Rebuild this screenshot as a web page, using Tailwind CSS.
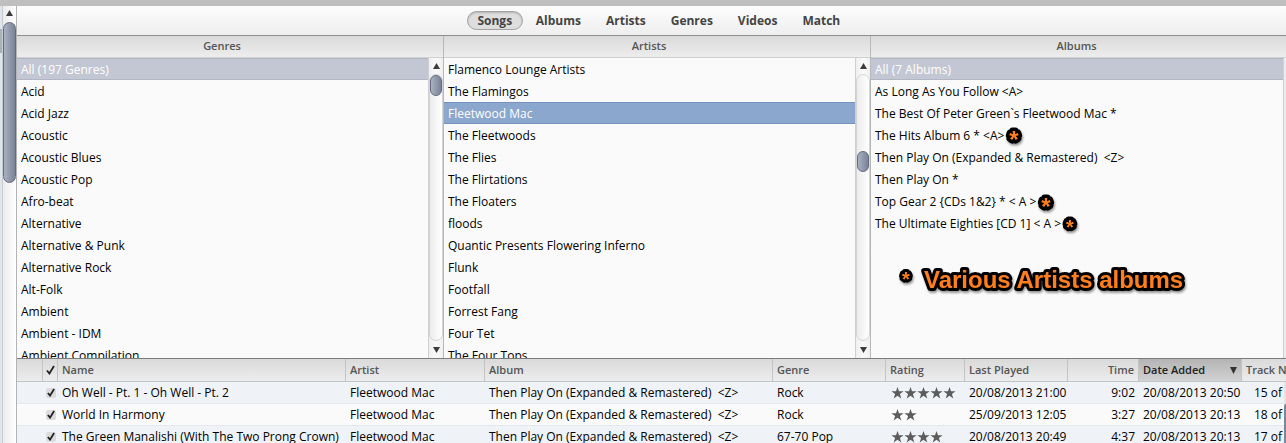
<!DOCTYPE html>
<html lang="en">
  <head>
    <meta charset="UTF-8" />
    <meta name="viewport" content="width=device-width, initial-scale=1.0" />
    <title>Music Library</title>
    <script src="https://cdn.jsdelivr.net/npm/@tailwindcss/browser@4"></script>
  </head>
  <body
    class="h-screen overflow-hidden flex flex-col bg-[#fafafa] font-['Open_Sans','Noto_Sans',sans-serif] text-[12px] leading-[22px] text-black"
  >
    <div class="h-[6px] shrink-0 bg-[#bfbfbf]"></div>

    <div class="flex flex-1 min-h-0">
      <!-- Sidebar edge with its scrollbar -->
      <aside class="flex w-[17px] shrink-0 border-r border-[#b4b4b4]">
        <div class="w-[3px] bg-[#e0e5eb] border-r border-[#c8ccd0] pt-[23px]">
          <div class="h-6 bg-[#a9b0b9]"></div>
        </div>
        <div class="flex-1 flex flex-col items-center bg-linear-to-r from-[#ececec] to-white">
          <svg class="w-[7px] h-[6px] mt-1 mb-[6px]" viewBox="0 0 7 6"><path d="M3.5 0 7 6H0z" fill="#3c3c3c" /></svg>
          <div class="w-[13px] h-[161px] rounded-full border border-[#626c7e] bg-linear-to-r from-[#a9b2c0] to-[#798498]"></div>
        </div>
      </aside>

      <main class="flex-1 min-w-0 flex flex-col">
        <nav
          class="h-[30px] shrink-0 flex items-center justify-center gap-px pl-4 border-b border-[#8f8f8f] bg-linear-to-b from-[#fdfdfd] to-[#eeeeee] text-[12px] font-bold text-[#444]"
        >
          <button class="w-14 h-[19px] leading-[17px] rounded-full border border-[#a3a3a3] bg-[#dedede] shadow-[inset_0_1px_2px_#0003]">Songs</button>
          <button class="px-3 h-[19px] leading-[19px]">Albums</button>
          <button class="px-3 h-[19px] leading-[19px]">Artists</button>
          <button class="px-3 h-[19px] leading-[19px]">Genres</button>
          <button class="px-3 h-[19px] leading-[19px]">Videos</button>
          <button class="px-3 h-[19px] leading-[19px]">Match</button>
        </nav>

        <!-- Column browser -->
        <div class="grid grid-cols-[427fr_427fr_415fr] h-[323px] shrink-0 border-b border-[#7b7b7b]">
          <section class="flex flex-col min-h-0 border-r border-[#b8b8b8]">
            <h2 class="h-[22px] shrink-0 pr-4 leading-5 text-center text-[11px] font-semibold text-[#555] border-b border-[#d0d0d0] bg-linear-to-b from-[#dadada] to-[#ededed]">Genres</h2>
            <div class="flex flex-1 min-h-0">
              <ul class="flex-1 overflow-hidden whitespace-nowrap leading-6">
                <li class="h-[22px] pl-1 bg-[#c3c7d3] border-y border-[#b1b6c5] leading-[22px] text-white">All (197 Genres)</li>
                <li class="h-[22px] pl-1">Acid</li>
                <li class="h-[22px] pl-1">Acid Jazz</li>
                <li class="h-[22px] pl-1">Acoustic</li>
                <li class="h-[22px] pl-1">Acoustic Blues</li>
                <li class="h-[22px] pl-1">Acoustic Pop</li>
                <li class="h-[22px] pl-1">Afro-beat</li>
                <li class="h-[22px] pl-1">Alternative</li>
                <li class="h-[22px] pl-1">Alternative &amp; Punk</li>
                <li class="h-[22px] pl-1">Alternative Rock</li>
                <li class="h-[22px] pl-1">Alt-Folk</li>
                <li class="h-[22px] pl-1">Ambient</li>
                <li class="h-[22px] pl-1">Ambient - IDM</li>
                <li class="h-[22px] pl-1">Ambient Compilation</li>
              </ul>
              <div class="w-[15px] flex flex-col items-center border-l border-[#cfcfcf] bg-linear-to-r from-[#efefef] via-[#fafafa] to-[#f0f0f0]">
                <svg class="w-[7px] h-[6px] mt-[5px] mb-[5px]" viewBox="0 0 7 6"><path d="M3.5 0 7 6H0z" fill="#3c3c3c" /></svg>
                <div class="w-[14px] flex-1 rounded-full border border-[#d4d4d4] bg-linear-to-r from-[#ececec] to-white">
                  <div class="h-[21px] rounded-full border border-[#626c7e] bg-linear-to-r from-[#a9b2c0] to-[#798498]"></div>
                </div>
                <svg class="w-[7px] h-[6px] mt-[6px] mb-[5px]" viewBox="0 0 7 6"><path d="M0 0h7L3.5 6z" fill="#3c3c3c" /></svg>
              </div>
            </div>
          </section>

          <section class="flex flex-col min-h-0 border-r border-[#b8b8b8]">
            <h2 class="h-[22px] shrink-0 pr-4 leading-5 text-center text-[11px] font-semibold text-[#555] border-b border-[#d0d0d0] bg-linear-to-b from-[#dadada] to-[#ededed]">Artists</h2>
            <div class="flex flex-1 min-h-0">
              <ul class="flex-1 overflow-hidden whitespace-nowrap leading-6">
                <li class="h-[22px] pl-1">Flamenco Lounge Artists</li>
                <li class="h-[22px] pl-1">The Flamingos</li>
                <li class="h-[22px] pl-1 bg-[#8ba7cd] border-y border-[#7393be] leading-[22px] text-white">Fleetwood Mac</li>
                <li class="h-[22px] pl-1">The Fleetwoods</li>
                <li class="h-[22px] pl-1">The Flies</li>
                <li class="h-[22px] pl-1">The Flirtations</li>
                <li class="h-[22px] pl-1">The Floaters</li>
                <li class="h-[22px] pl-1">floods</li>
                <li class="h-[22px] pl-1">Quantic Presents Flowering Inferno</li>
                <li class="h-[22px] pl-1">Flunk</li>
                <li class="h-[22px] pl-1">Footfall</li>
                <li class="h-[22px] pl-1">Forrest Fang</li>
                <li class="h-[22px] pl-1">Four Tet</li>
                <li class="h-[22px] pl-1">The Four Tops</li>
              </ul>
              <div class="w-[15px] flex flex-col items-center border-l border-[#cfcfcf] bg-linear-to-r from-[#efefef] via-[#fafafa] to-[#f0f0f0]">
                <svg class="w-[7px] h-[6px] mt-[5px] mb-[5px]" viewBox="0 0 7 6"><path d="M3.5 0 7 6H0z" fill="#3c3c3c" /></svg>
                <div class="w-[14px] flex-1 pt-[76px] rounded-full border border-[#d4d4d4] bg-linear-to-r from-[#ececec] to-white">
                  <div class="h-[21px] rounded-full border border-[#626c7e] bg-linear-to-r from-[#a9b2c0] to-[#798498]"></div>
                </div>
                <svg class="w-[7px] h-[6px] mt-[6px] mb-[5px]" viewBox="0 0 7 6"><path d="M0 0h7L3.5 6z" fill="#3c3c3c" /></svg>
              </div>
            </div>
          </section>

          <section class="relative flex flex-col min-h-0">
            <h2 class="h-[22px] shrink-0 pr-1 leading-5 text-center text-[11px] font-semibold text-[#555] border-b border-[#d0d0d0] bg-linear-to-b from-[#dadada] to-[#ededed]">Albums</h2>
            <div class="flex flex-1 min-h-0">
              <ul class="flex-1 overflow-hidden whitespace-nowrap leading-6">
                <li class="h-[22px] pl-1 bg-[#c3c7d3] border-y border-[#b1b6c5] leading-[22px] text-white">All (7 Albums)</li>
                <li class="h-[22px] pl-1">As Long As You Follow &lt;A&gt;</li>
                <li class="h-[22px] pl-1">The Best Of Peter Green`s Fleetwood Mac *</li>
                <li class="h-[22px] pl-1 flex">
                  The Hits Album 6 * &lt;A&gt;
                  <svg class="w-[18px] h-[22px] overflow-visible drop-shadow-[1px_2px_1px_#0006] font-['Liberation_Sans',Arial,sans-serif] font-bold" viewBox="0 0 18 22"><text x="10" y="24" text-anchor="middle" font-size="24" fill="#ff7f1c" stroke="#000" stroke-width="7" stroke-linejoin="round" paint-order="stroke">*</text></svg>
                </li>
                <li class="h-[22px] pl-1">Then Play On (Expanded &amp; Remastered) &nbsp;&lt;Z&gt;</li>
                <li class="h-[22px] pl-1">Then Play On *</li>
                <li class="h-[22px] pl-1 flex">
                  Top Gear 2 {CDs 1&amp;2} * &lt; A &gt;
                  <svg class="w-[18px] h-[22px] overflow-visible drop-shadow-[1px_2px_1px_#0006] font-['Liberation_Sans',Arial,sans-serif] font-bold" viewBox="0 0 18 22"><text x="10" y="25" text-anchor="middle" font-size="24" fill="#ff7f1c" stroke="#000" stroke-width="7" stroke-linejoin="round" paint-order="stroke">*</text></svg>
                </li>
                <li class="h-[22px] pl-1 flex">
                  The Ultimate Eighties [CD 1] &lt; A &gt;
                  <svg class="w-[18px] h-[22px] overflow-visible drop-shadow-[1px_2px_1px_#0006] font-['Liberation_Sans',Arial,sans-serif] font-bold" viewBox="0 0 18 22"><text x="9" y="22" text-anchor="middle" font-size="20" fill="#ff7f1c" stroke="#000" stroke-width="7" stroke-linejoin="round" paint-order="stroke">*</text></svg>
                </li>
              </ul>
              <div class="w-[3px] border-l border-[#cfcfcf] bg-[#ececec]"></div>
            </div>
            <!-- Note laid over the list -->
            <svg class="absolute left-[27px] top-[228px] w-[290px] h-8 drop-shadow-[1px_2px_1px_#0006] font-['Liberation_Sans',Arial,sans-serif] font-bold" viewBox="0 0 290 32">
              <g fill="#ff7f1c" stroke="#000" stroke-width="6" stroke-linejoin="round" paint-order="stroke">
                <text x="4" y="22" font-size="20">*</text>
                <text x="26" y="24" font-size="24">Various Artists albums</text>
              </g>
            </svg>
          </section>
        </div>

        <!-- Track list -->
        <div class="flex flex-1 min-h-0 relative overflow-hidden">
          <table class="w-full table-fixed self-start border-separate border-spacing-0 whitespace-nowrap">
            <colgroup>
              <col class="w-[26px]" />
              <col class="w-[15px]" />
              <col class="w-[288px]" />
              <col class="w-[139px]" />
              <col class="w-[288px]" />
              <col class="w-[113px]" />
              <col class="w-[79px]" />
              <col class="w-[103px]" />
              <col class="w-[71px]" />
              <col class="w-[103px]" />
              <col />
            </colgroup>
            <thead class="bg-linear-to-b from-[#dadada] to-[#ededed] text-left text-[11px] text-[#555]">
              <tr class="h-[23px] *:border-b *:border-r *:border-[#c4c4c4] *:p-0 *:overflow-hidden *:font-semibold">
                <th></th>
                <th><svg class="w-[9px] h-[10px] mx-auto" viewBox="0 0 9 10" role="img" aria-label="Checked"><path d="M1 5.5 3.4 8.5 8 1" fill="none" stroke="#222" stroke-width="1.8" /></svg></th>
                <th><span class="pl-1">Name</span></th>
                <th><span class="pl-1">Artist</span></th>
                <th><span class="pl-1">Album</span></th>
                <th><span class="pl-1">Genre</span></th>
                <th><span class="pl-1">Rating</span></th>
                <th><span class="pl-1">Last Played</span></th>
                <th class="text-right"><span class="pr-1">Time</span></th>
                <th class="bg-linear-to-b from-[#b4b4b4] to-[#d2d2d2] text-[#222]"><span class="flex items-center justify-between pl-1 pr-1">Date Added<svg class="w-[7px] h-[7px]" viewBox="0 0 7 7"><path d="M0 0h7L3.5 7z" fill="#333" /></svg></span></th>
                <th class="border-r-0!"><span class="pl-1">Track N</span></th>
              </tr>
            </thead>
            <tbody id="tracks"></tbody>
          </table>
          <div class="absolute right-0 top-[23px] bottom-0 w-[2px] bg-[#e4e4e4] pt-[22px]"><div class="h-full rounded-tl bg-[#7d879a]"></div></div>
        </div>
      </main>
    </div>

    <script>
      const tracks = [
        { name: "Oh Well - Pt. 1 - Oh Well - Pt. 2", genre: "Rock", rating: 5, played: "20/08/2013 21:00", time: "9:02", added: "20/08/2013 20:50", track: "15 of" },
        { name: "World In Harmony", genre: "Rock", rating: 2, played: "25/09/2013 12:05", time: "3:27", added: "20/08/2013 20:13", track: "18 of" },
        { name: "The Green Manalishi (With The Two Prong Crown)", genre: "67-70 Pop", rating: 4, played: "20/08/2013 20:49", time: "4:37", added: "20/08/2013 20:13", track: "17 of" },
      ];

      const star =
        '<svg class="w-[13px] h-3" viewBox="0 0 13 12"><path d="M6.5 0 8 4.3h4.6L8.9 7l1.4 4.6-3.8-2.8-3.8 2.8L4.1 7 .4 4.3H5z" fill="#5c5c5c" /></svg>';

      document.getElementById("tracks").innerHTML = tracks
        .map(
          (t) => `
            <tr class="h-[22px] odd:bg-[#eff3f7] *:border-b *:border-[#e4e8ec] *:p-0 *:leading-[21px] *:overflow-hidden">
              <td></td>
              <td>
                <label class="grid place-items-center size-[10px] mx-auto rounded-xs bg-[#dcdcdc]">
                  <input type="checkbox" checked aria-label="${t.name}" class="appearance-none size-[10px] col-start-1 row-start-1" />
                  <svg class="w-2 h-[9px] col-start-1 row-start-1 pointer-events-none" viewBox="0 0 9 10"><path d="M1 5.5 3.4 8.5 8 1" fill="none" stroke="#222" stroke-width="2" /></svg>
                </label>
              </td>
              <td><span class="pl-1">${t.name}</span></td>
              <td><span class="pl-1">Fleetwood Mac</span></td>
              <td><span class="pl-1">Then Play On (Expanded &amp; Remastered) &nbsp;&lt;Z&gt;</span></td>
              <td><span class="pl-1">${t.genre}</span></td>
              <td><span class="flex pl-[5px]" role="img" aria-label="${t.rating} stars">${star.repeat(t.rating)}</span></td>
              <td><span class="pl-1">${t.played}</span></td>
              <td class="text-right"><span class="pr-1">${t.time}</span></td>
              <td><span class="pl-1">${t.added}</span></td>
              <td><span class="pl-3">${t.track}</span></td>
            </tr>`
        )
        .join("");
    </script>
  </body>
</html>
